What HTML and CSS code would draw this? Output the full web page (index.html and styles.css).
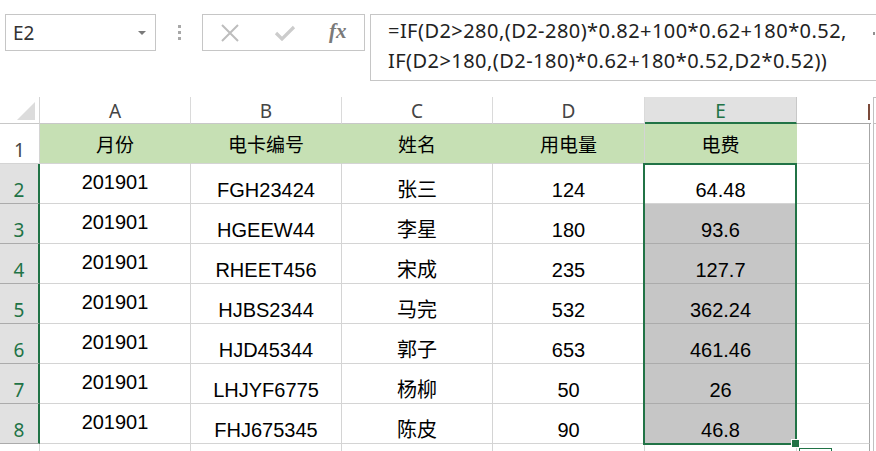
FILE: index.html
```html
<!DOCTYPE html>
<html>
<head>
<meta charset="utf-8">
<link rel="stylesheet" href="styles.css">
</head>
<body>
<div class="bar">
  <div class="namebox"><span class="nb-text">E2</span><span class="nb-arrow"></span></div>
  <div class="dots"><i></i><i></i><i></i></div>
  <div class="btns">
    <svg class="ico-x" width="20" height="18" viewBox="0 0 20 18"><path d="M2 1 L18 17 M18 1 L2 17" stroke="#bdbdbd" stroke-width="2" fill="none"/></svg>
    <svg class="ico-v" width="22" height="16" viewBox="0 0 22 16"><path d="M2 8 L8 14 L20 2" stroke="#cccccc" stroke-width="3.2" fill="none"/></svg>
    <span class="fx">fx</span>
  </div>
  <div class="formula">
    <div>=IF(D2&gt;280,(D2-280)*0.82+100*0.62+180*0.52,</div>
    <div>IF(D2&gt;180,(D2-180)*0.62+180*0.52,D2*0.52))</div>
    <span class="fmark"></span>
  </div>
</div>

<div class="sheet">
  <div class="corner"><span class="tri"></span></div>
  <div class="ch">A</div>
  <div class="ch">B</div>
  <div class="ch">C</div>
  <div class="ch">D</div>
  <div class="ch sel">E</div>
  <div class="ch chf"><span class="fbar"></span></div>
  <div class="edge"><span class="edge-line"></span></div>

  <div class="rh">1</div>
  <div class="c hd">月份</div>
  <div class="c hd">电卡编号</div>
  <div class="c hd">姓名</div>
  <div class="c hd">用电量</div>
  <div class="c hd">电费</div>
  <div class="c f"></div>

  <div class="rh rs">2</div>
  <div class="c a">201901</div><div class="c">FGH23424</div><div class="c">张三</div><div class="c">124</div><div class="c">64.48</div><div class="c f"></div>

  <div class="rh rs">3</div>
  <div class="c a">201901</div><div class="c">HGEEW44</div><div class="c">李星</div><div class="c">180</div><div class="c g">93.6</div><div class="c f"></div>

  <div class="rh rs">4</div>
  <div class="c a">201901</div><div class="c">RHEET456</div><div class="c">宋成</div><div class="c">235</div><div class="c g">127.7</div><div class="c f"></div>

  <div class="rh rs">5</div>
  <div class="c a">201901</div><div class="c">HJBS2344</div><div class="c">马完</div><div class="c">532</div><div class="c g">362.24</div><div class="c f"></div>

  <div class="rh rs">6</div>
  <div class="c a">201901</div><div class="c">HJD45344</div><div class="c">郭子</div><div class="c">653</div><div class="c g">461.46</div><div class="c f"></div>

  <div class="rh rs">7</div>
  <div class="c a">201901</div><div class="c">LHJYF6775</div><div class="c">杨柳</div><div class="c">50</div><div class="c g">26</div><div class="c f"></div>

  <div class="rh rs">8</div>
  <div class="c a">201901</div><div class="c">FHJ675345</div><div class="c">陈皮</div><div class="c">90</div><div class="c g">46.8</div><div class="c f"></div>

  <div class="rh last"></div>
  <div class="c last"></div><div class="c last"></div><div class="c last"></div><div class="c last"></div><div class="c last"></div><div class="c f last"></div>

  <div class="selbox"></div>
  <div class="handle"></div>
  <div class="qa"></div>
</div>
</body>
</html>
```
FILE: styles.css
```css
html, body {
  margin: 0;
  padding: 0;
  background: #ffffff;
  width: 876px;
  height: 451px;
  overflow: hidden;
}
body {
  font-family: "Liberation Sans", "Noto Sans CJK SC", sans-serif;
}

/* ---------- formula bar ---------- */
.bar {
  display: flex;
  align-items: flex-start;
  padding: 14px 0 0 5px;
  height: 83px;
  box-sizing: border-box;
  overflow: hidden;
}
.namebox {
  width: 151px;
  height: 37px;
  box-sizing: border-box;
  border: 1px solid #c6c6c6;
  display: flex;
  align-items: center;
  justify-content: space-between;
  padding: 0 9px 0 7px;
  background: #fff;
}
.nb-text {
  font-family: "Noto Sans", "Open Sans", sans-serif;
  font-size: 19px;
  color: #333;
}
.nb-arrow {
  width: 0;
  height: 0;
  border-left: 4px solid transparent;
  border-right: 4px solid transparent;
  border-top: 4px solid #7a7a7a;
}
.dots {
  width: 46px;
  height: 37px;
  display: flex;
  flex-direction: column;
  align-items: center;
  justify-content: center;
  gap: 3px;
}
.dots i {
  display: block;
  width: 3px;
  height: 3px;
  background: #a8a8a8;
}
.btns {
  width: 163px;
  height: 37px;
  box-sizing: border-box;
  border: 1px solid #c6c6c6;
  display: flex;
  align-items: center;
  padding-left: 17px;
}
.ico-x { margin-right: 34px; }
.ico-v { margin-right: 33px; }
.fx {
  font-family: "Liberation Serif", "DejaVu Serif", serif;
  font-style: italic;
  font-weight: bold;
  font-size: 21px;
  color: #7a7a7a;
  margin-top: -3px;
}
.formula {
  position: relative;
  margin-left: 5px;
  flex: 1;
  margin-right: -20px;
  height: 67px;
  box-sizing: border-box;
  border: 1px solid #c6c6c6;
  padding: 1px 0 0 17px;
  font-family: "Noto Sans", "Open Sans", sans-serif;
  font-size: 20px;
  letter-spacing: 0.45px;
  line-height: 30px;
  color: #222;
  white-space: nowrap;
}
.fmark {
  position: absolute;
  left: 502px;
  top: 17px;
  width: 2px;
  height: 3px;
  background: #909090;
}

/* ---------- sheet ---------- */
.sheet {
  position: relative;
  margin-top: 14px;
  display: grid;
  grid-template-columns: 40px 151px 151px 151px 152px 152px 73px 1fr;
  grid-template-rows: 27px repeat(8, 40px) 7px;
  overflow: hidden;
}
.corner {
  position: relative;
  border-right: 1px solid #d4d4d4;
  border-bottom: 1px solid #c8c8c8;
}
.tri {
  position: absolute;
  right: 4px;
  bottom: 3px;
  width: 0;
  height: 0;
  border-left: 18px solid transparent;
  border-bottom: 18px solid #dcdcdc;
}
.ch {
  box-sizing: border-box;
  border-right: 1px solid #dadada;
  border-bottom: 1px solid #c8c8c8;
  display: flex;
  align-items: center;
  justify-content: center;
  font-family: "Noto Sans", "Open Sans", sans-serif;
  font-size: 19px;
  color: #444;
  padding-top: 2px;
}
.ch.sel {
  background: #e1e1e1;
  color: #217346;
  border-bottom: 2px solid #217346;
  border-right-color: #c8c8c8;
}
.ch.chf {
  position: relative;
  border-right: none;
  border-bottom: 1px solid #a6a6a6;
  width: 74px;
}
.fbar {
  position: absolute;
  right: 1px;
  top: 7px;
  width: 2px;
  height: 16px;
  background: #7b4a3a;
}
.edge {
  grid-row: 1 / span 10;
  grid-column: 8;
  position: relative;
}
.edge-line {
  position: absolute;
  left: 3px;
  top: 0;
  right: 0;
  bottom: 0;
  border-left: 1px solid #c0c0c0;
  border-top: 1px solid #c0c0c0;
}
.edge-line::after {
  content: "";
  position: absolute;
  left: 0;
  right: 0;
  top: 25px;
  border-top: 1px solid #c0c0c0;
}

.rh {
  box-sizing: border-box;
  border-right: 1px solid #d4d4d4;
  border-bottom: 1px solid #d4d4d4;
  display: flex;
  align-items: flex-end;
  justify-content: center;
  padding-bottom: 0;
  font-family: "Noto Sans", "Open Sans", sans-serif;
  font-size: 19px;
  color: #444;
}
.rh.rs {
  background: #e1e1e1;
  color: #217346;
  border-bottom-color: #ababab;
  border-right: 2px solid #217346;
}

.c {
  box-sizing: border-box;
  border-right: 1px solid #d4d4d4;
  border-bottom: 1px solid #d4d4d4;
  display: flex;
  align-items: flex-end;
  justify-content: center;
  padding-bottom: 1px;
  font-size: 20px;
  color: #000;
  line-height: 24px;
}
.c.a {
  align-items: flex-start;
  padding-top: 6px;
  padding-bottom: 0;
}
.c.hd {
  background: #c6e0b4;
  align-items: center;
  padding: 0;
  border-right-color: #c6e0b4;
  border-bottom-color: #d4d4d4;
  font-family: "Noto Sans CJK SC", sans-serif;
  font-size: 19px;
}
.c.hd:nth-child(13) { border-right-color: #d4d4d4; }
.c.g {
  background: #c6c6c6;
  border-bottom-color: #ababab;
}
.c.f {
  border-right: 1px solid #a6a6a6;
  border-bottom-color: #d4d4d4;
}
.last {
  border-bottom: none;
}

.selbox {
  position: absolute;
  left: 643px;
  top: 66px;
  width: 154px;
  height: 282px;
  box-sizing: border-box;
  border: 2px solid #217346;
  pointer-events: none;
}
.handle {
  position: absolute;
  left: 791px;
  top: 342px;
  width: 7px;
  height: 7px;
  background: #217346;
  border: 1px solid #fff;
}
.qa {
  position: absolute;
  left: 799px;
  top: 351px;
  width: 33px;
  height: 10px;
  box-sizing: border-box;
  border: 1px solid #217346;
  background: #fff;
}
```
